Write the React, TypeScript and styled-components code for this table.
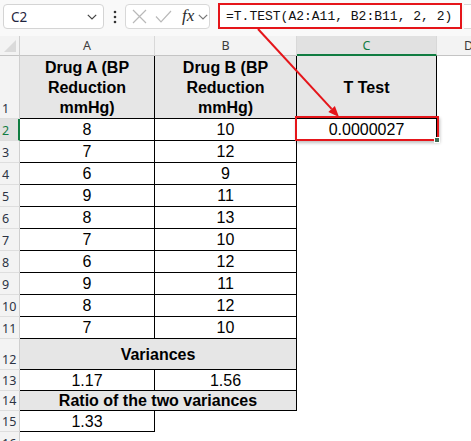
import React from "react";
import styled, { createGlobalStyle, css } from "styled-components";

const GlobalStyle = createGlobalStyle`
  html, body { margin: 0; padding: 0; background: #ffffff; }
  body { font-family: "Liberation Sans", Arial, sans-serif; }
  * { box-sizing: border-box; }
`;

const Page = styled.div`
  position: relative;
  width: 471px;
  height: 441px;
  overflow: hidden;
  background: #ffffff;
`;

/* ---------- formula bar ---------- */
const FormulaBar = styled.div`
  height: 36px;
  display: flex;
  align-items: flex-start;
  padding: 4px 0 0 3px;
  background: #f9f9f9;
`;

const NameBox = styled.div`
  width: 101px;
  height: 25px;
  background: #ffffff;
  border: 1px solid #d4d4d4;
  border-radius: 4px;
  display: flex;
  align-items: center;
  justify-content: space-between;
  padding: 0 6px 0 7px;
  font-family: "Noto Sans", "Open Sans", sans-serif;
  font-size: 13.5px;
  color: #1f2540;
`;

const Dots = styled.div`
  width: 21px;
  height: 25px;
  display: flex;
  align-items: center;
  justify-content: center;
`;

const ButtonGroup = styled.div`
  width: 85px;
  height: 25px;
  background: #ffffff;
  border: 1px solid #d8d8d8;
  border-radius: 4px;
  display: flex;
  align-items: center;
  padding-left: 5px;
`;

const Slot = styled.span<{ $ml: number }>`
  display: inline-flex;
  align-items: center;
  margin-left: ${(p) => p.$ml}px;
`;

const Fx = styled.span`
  font-family: "Liberation Serif", "Times New Roman", serif;
  font-style: italic;
  font-size: 17px;
  color: #2b2b2b;
  line-height: 1;
  margin-top: -2px;
`;

const FormulaInput = styled.div`
  margin-left: 8px;
  margin-top: -1px;
  width: 244px;
  height: 26px;
  border: 2px solid #e5151a;
  background: #ffffff;
  display: flex;
  align-items: center;
  padding-left: 6px;
  font-family: "Liberation Mono", "Courier New", monospace;
  font-size: 13px;
  color: #111;
  white-space: nowrap;
`;

const FormulaTail = styled.div`
  flex: 1;
  height: 25px;
  margin-left: 2px;
  background: #ffffff;
  border-top: 1px solid #d8d8d8;
  border-bottom: 1px solid #d8d8d8;
`;

/* ---------- sheet grid ---------- */
const Sheet = styled.div`
  display: grid;
  grid-template-columns: 20px 135px 142px 140px 64px;
  grid-template-rows: 20px 63px repeat(10, 22px) 31px 21px 20px 21px 22px;
`;

const Corner = styled.div`
  background: #f3f3f3;
  border-right: 1px solid #cfcfcf;
  border-bottom: 1px solid #c4c4c4;
  display: flex;
  align-items: flex-end;
  justify-content: flex-end;
  padding: 0 3px 3px 0;
`;

const Triangle = styled.div`
  width: 0;
  height: 0;
  border-left: 12px solid transparent;
  border-bottom: 12px solid #dadada;
`;

const ColHead = styled.div<{ $sel?: boolean }>`
  background: #f3f3f3;
  border-right: 1px solid #d8d8d8;
  border-bottom: 1px solid #c4c4c4;
  display: flex;
  align-items: center;
  justify-content: center;
  font-family: "Noto Sans", "Open Sans", sans-serif;
  font-size: 12.5px;
  color: #3c3c3c;
  overflow: hidden;
  ${(p) =>
    p.$sel &&
    css`
      background: #e1e1e1;
      color: #107c41;
      border-bottom: 2px solid #107c41;
    `}
`;

const RowHead = styled.div<{ $sel?: boolean }>`
  background: #f3f3f3;
  border-right: 1px solid #cfcfcf;
  border-bottom: 1px solid #dedede;
  display: flex;
  align-items: flex-end;
  padding: 0 0 1px 2px;
  font-family: "Noto Sans", "Open Sans", sans-serif;
  font-size: 12.5px;
  line-height: 16px;
  color: #2c3344;
  ${(p) =>
    p.$sel &&
    css`
      background: #e1e1e1;
      color: #107c41;
      border-right: 2px solid #107c41;
    `}
`;

const Cell = styled.div<{
  $head?: boolean;
  $r?: boolean;
  $b?: boolean;
  $span?: number;
}>`
  position: relative;
  grid-column: span ${(p) => p.$span ?? 1};
  display: flex;
  align-items: center;
  justify-content: center;
  text-align: center;
  font-family: "Liberation Sans", Arial, sans-serif;
  font-size: 16px;
  line-height: 20px;
  color: #000;
  background: ${(p) => (p.$head ? "#e6e6e6" : "transparent")};
  font-weight: ${(p) => (p.$head ? 700 : 400)};
  border-right: ${(p) => (p.$r ? "1px solid #000" : "none")};
  border-bottom: ${(p) => (p.$b ? "1px solid #000" : "none")};
  padding-top: 1px;
`;

const Highlight = styled.div`
  position: absolute;
  top: -3px;
  left: -2px;
  right: -3px;
  bottom: -1px;
  border: 2px solid #e5151a;
  box-shadow: 1px 2px 3px rgba(0, 0, 0, 0.25);
  pointer-events: none;
`;

const FillHandle = styled.div`
  position: absolute;
  right: -4px;
  bottom: -3px;
  width: 6px;
  height: 6px;
  background: #3f6b52;
  border: 1px solid #ffffff;
`;

const Annotation = styled.svg`
  position: absolute;
  left: 0;
  top: 0;
  pointer-events: none;
`;

const ChevronDown = ({ color }: { color: string }) => (
  <svg width="10" height="6" viewBox="0 0 10 6">
    <polyline points="0.8,0.8 5,5 9.2,0.8" fill="none" stroke={color} strokeWidth="1.2" />
  </svg>
);

const colLetters = ["A", "B", "C", "D"];

const dataRows: [string, string][] = [
  ["7", "12"],
  ["6", "9"],
  ["9", "11"],
  ["8", "13"],
  ["7", "10"],
  ["6", "12"],
  ["9", "11"],
  ["8", "12"],
  ["7", "10"],
];

export default function App() {
  return (
    <>
      <GlobalStyle />
      <Page>
        <FormulaBar>
          <NameBox>
            <span>C2</span>
            <ChevronDown color="#444" />
          </NameBox>
          <Dots>
            <svg width="4" height="14" viewBox="0 0 4 14">
              <circle cx="2" cy="2" r="1.3" fill="#333" />
              <circle cx="2" cy="7" r="1.3" fill="#333" />
              <circle cx="2" cy="12" r="1.3" fill="#333" />
            </svg>
          </Dots>
          <ButtonGroup>
            <Slot $ml={1}>
              <svg width="15" height="15" viewBox="0 0 15 15">
                <path d="M1 1 L14 14 M14 1 L1 14" stroke="#b9b9b9" strokeWidth="1.2" fill="none" />
              </svg>
            </Slot>
            <Slot $ml={8}>
              <svg width="17" height="13" viewBox="0 0 17 13">
                <polyline points="1,6.5 6,11.8 16,1" stroke="#b9b9b9" strokeWidth="1.2" fill="none" />
              </svg>
            </Slot>
            <Slot $ml={10}>
              <Fx>fx</Fx>
            </Slot>
            <Slot $ml={4}>
              <ChevronDown color="#777" />
            </Slot>
          </ButtonGroup>
          <FormulaInput>=T.TEST(A2:A11, B2:B11, 2, 2)</FormulaInput>
          <FormulaTail />
        </FormulaBar>

        <Sheet>
          <Corner>
            <Triangle />
          </Corner>
          {colLetters.map((c) => (
            <ColHead key={c} $sel={c === "C"}>
              {c}
            </ColHead>
          ))}

          <RowHead>1</RowHead>
          <Cell $head $r $b>
            Drug A (BP
            <br />
            Reduction
            <br />
            mmHg)
          </Cell>
          <Cell $head $r $b>
            Drug B (BP
            <br />
            Reduction
            <br />
            mmHg)
          </Cell>
          <Cell $head $r $b>
            T Test
          </Cell>
          <Cell />

          <RowHead $sel>2</RowHead>
          <Cell $r $b>8</Cell>
          <Cell $r $b>10</Cell>
          <Cell $r $b>
            0.0000027
            <Highlight />
            <FillHandle />
          </Cell>
          <Cell />

          {dataRows.map(([a, b], i) => (
            <React.Fragment key={i}>
              <RowHead>{i + 3}</RowHead>
              <Cell $r $b>{a}</Cell>
              <Cell $r $b>{b}</Cell>
              <Cell />
              <Cell />
            </React.Fragment>
          ))}

          <RowHead>12</RowHead>
          <Cell $head $r $b $span={2}>
            Variances
          </Cell>
          <Cell />
          <Cell />

          <RowHead>13</RowHead>
          <Cell $r $b>1.17</Cell>
          <Cell $r $b>1.56</Cell>
          <Cell />
          <Cell />

          <RowHead>14</RowHead>
          <Cell $head $r $b $span={2}>
            Ratio of the two variances
          </Cell>
          <Cell />
          <Cell />

          <RowHead>15</RowHead>
          <Cell $r $b>1.33</Cell>
          <Cell />
          <Cell />
          <Cell />

          <RowHead>16</RowHead>
          <Cell />
          <Cell />
          <Cell />
          <Cell />
        </Sheet>

        <Annotation width="471" height="441" viewBox="0 0 471 441">
          <line x1="258" y1="29" x2="331.6" y2="108.9" stroke="#e5151a" strokeWidth="2" />
          <polygon points="339,117 328.3,111.9 334.9,105.9" fill="#e5151a" />
        </Annotation>
      </Page>
    </>
  );
}
